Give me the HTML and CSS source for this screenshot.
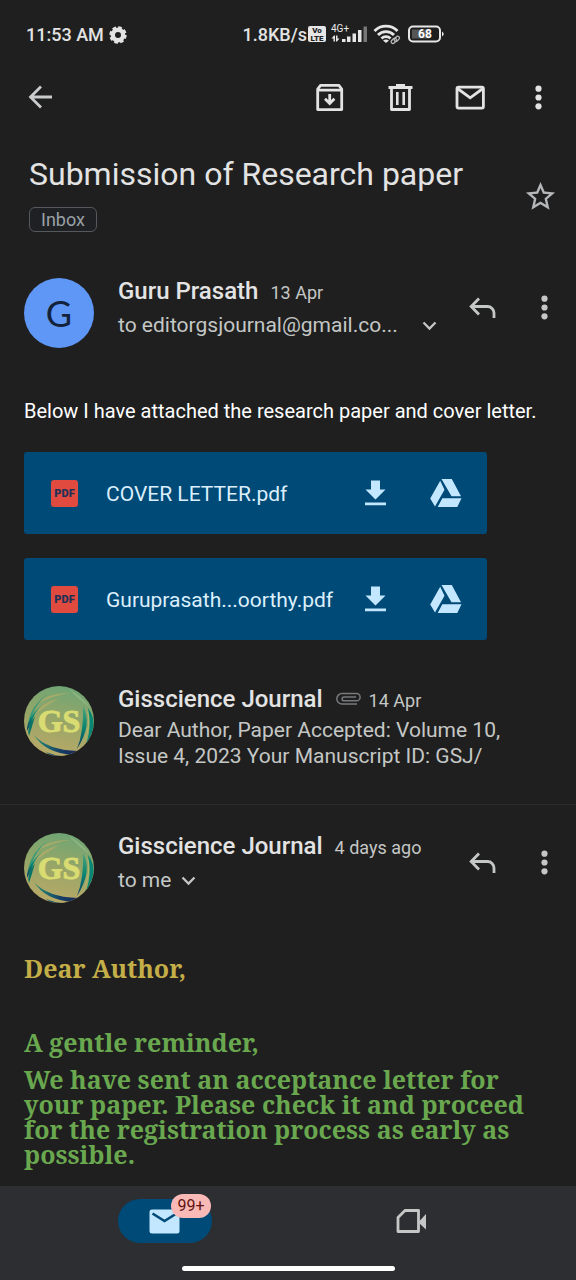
FILE: index.html
```html
<!DOCTYPE html>
<html lang="en">
<head>
<meta charset="utf-8">
<meta name="viewport" content="width=device-width, initial-scale=1">
<title>Submission of Research paper</title>
<link rel="stylesheet" href="styles.css">
</head>
<body>
<svg class="sprite" aria-hidden="true">
  <defs>
    <linearGradient id="disc" x1="0.6" y1="0" x2="0.4" y2="1">
      <stop offset="0" stop-color="#6fa574"/>
      <stop offset="0.5" stop-color="#98a667"/>
      <stop offset="1" stop-color="#bba968"/>
    </linearGradient>
    <linearGradient id="leaf" x1="0" y1="0" x2="0" y2="1">
      <stop offset="0" stop-color="#4fa57c"/>
      <stop offset="0.5" stop-color="#078571"/>
      <stop offset="1" stop-color="#123c63"/>
    </linearGradient>
    <linearGradient id="deep" x1="0" y1="0" x2="1" y2="0">
      <stop offset="0" stop-color="#27917a"/>
      <stop offset="0.6" stop-color="#153f66"/>
      <stop offset="1" stop-color="#1a2559"/>
    </linearGradient>
    <clipPath id="round"><circle cx="35" cy="35" r="35"/></clipPath>
  </defs>
  <symbol id="more" viewBox="0 0 35 35"><g fill="currentColor"><circle cx="17.5" cy="8.7" r="3.1"/><circle cx="17.5" cy="17.5" r="3.1"/><circle cx="17.5" cy="26.3" r="3.1"/></g></symbol>
  <symbol id="reply" viewBox="0 0 35 35"><path d="M14 8.5 6.200 16.5l7.8 8M6.500 16.5h16a6.5 6.5 0 0 1 6.5 6.5v5" fill="none" stroke="currentColor" stroke-width="2.8"/></symbol>
  <symbol id="down" viewBox="0 0 35 35"><path d="m11.5 14.5 6 6 6-6" fill="none" stroke="currentColor" stroke-width="2.3"/></symbol>
  <symbol id="download" viewBox="0 0 35 35"><path d="M12 4.500h9v9h5.500L16.500 23.500 6.500 13.500H12zM6 26.500h21v2.800H6z" fill="currentColor"/></symbol>
  <symbol id="drive" viewBox="0 0 35 35"><path d="M12.500 3h10.300L32 20.200h-9.500zM11.200 4.800 15.500 13.800 6 30.500 1.200 22.500zM13.300 22.300H32.500l-4.200 8.700H8.700z" fill="currentColor"/></symbol>
  <symbol id="logo" viewBox="0 0 70 70">
    <g clip-path="url(#round)">
      <rect width="70" height="70" fill="url(#disc)"/>
      <path d="M12 18Q26 6 46 7Q27 10 12 18zM8 30Q17 17 35 12Q20 21 8 30z" fill="#bcae69" opacity="0.65"/>
      <path d="M45 3Q57 10 67 22Q55 14 45 3z" fill="#8db582"/>
      <path d="M23 8Q7 20 4 36L8 30Q12 18 23 8z" fill="#399b76"/>
      <path d="M19 18Q2 32 3 45L8 35Q10 27 19 18z" fill="url(#leaf)"/>
      <path d="M11 30Q2 42 5 50Q8 41 11 30z" fill="#087467"/>
      <path d="M59 20Q69 38 53 63Q60 45 59 20z" fill="url(#leaf)"/>
      <path d="M64 22Q76 38 62 58Q68 41 64 22z" fill="#078773"/>
      <path d="M63 23Q69 38 59 58Q67 40 63 23z" fill="#b5ba6d"/>
      <path d="M10 49Q23 64 54 65L49 69Q21 67 10 49z" fill="url(#deep)"/>
      <path d="M11 55Q25 69 49 70H34Q21 67 11 55z" fill="#b6ad68"/>
      <path d="M15 61Q27 71 44 70H28z" fill="url(#deep)"/>
    </g>
  </symbol>
</svg>

<header>
  <div class="status">
    <div class="status-group">
      <span>11:53 AM</span>
      <svg class="gear" viewBox="0 0 18 18"><circle cx="9" cy="9" r="5.200" fill="none" stroke="currentColor" stroke-width="4.400"/><circle cx="9" cy="9" r="7.400" fill="none" stroke="currentColor" stroke-width="2.600" stroke-dasharray="3.600 2.210"/></svg>
    </div>
    <div class="status-group status-right">
      <span>1.8KB/s</span>
      <svg class="signals" viewBox="0 0 138 24">
        <rect x="1" y="3" width="18" height="16" rx="2" fill="#e6e6e6"/>
        <text class="volte" x="10" y="10" text-anchor="middle">Vo</text>
        <text class="volte" x="10" y="18" text-anchor="middle">LTE</text>
        <text class="network" x="24" y="9">4G+</text>
        <g fill="#e6e6e6">
          <path d="M24.500 15.500l2.500-3h1v6h-1.500v-3zM32.500 15.500l-2.500 3h-1v-6h1.500v3z"/>
          <rect x="35" y="16" width="3.500" height="3"/><rect x="40" y="13.500" width="3.500" height="5.500"/><rect x="45.500" y="10.500" width="3.500" height="8.500"/><rect x="51" y="7" width="3.500" height="12"/>
          <rect x="56.500" y="3.500" width="3.500" height="15.500" fill="#777"/>
        </g>
        <g fill="none" stroke="#e6e6e6" stroke-width="2.800"><path d="M67.500 8a16 16 0 0 1 23 0M71 12a11 11 0 0 1 16 0M74.500 15.500a6.500 6.500 0 0 1 9 0"/></g>
        <path d="M76 17.500q3-2 6 0l-3 2.500z" fill="#e6e6e6"/>
        <g fill="none" stroke="#bbb" stroke-width="1.300"><rect x="84" y="16" width="6" height="3.500" rx="1.700" transform="rotate(-45 87 18)"/><rect x="87" y="14" width="6" height="3.500" rx="1.700" transform="rotate(-45 90 16)"/></g>
        <rect x="102" y="3.500" width="31" height="15" rx="4" fill="none" stroke="#e6e6e6" stroke-width="2"/>
        <rect x="105" y="6.500" width="17" height="9" fill="#555"/>
        <path d="M135 8.500q3.500 2.500 0 5z" fill="#e6e6e6"/>
        <text class="battery" x="118" y="15" text-anchor="middle">68</text>
      </svg>
    </div>
  </div>
  <div class="toolbar">
    <button class="tool back" aria-label="Back"><svg class="icon" viewBox="0 0 35 35"><path d="M18 6.500 7.500 17 18 27.500M7.500 17H29" fill="none" stroke="currentColor" stroke-width="2.800"/></svg></button>
    <span class="spacer"></span>
    <button class="tool" aria-label="Archive"><svg class="icon" viewBox="0 0 35 35"><g fill="none" stroke="currentColor" stroke-width="2.800" stroke-linejoin="round"><path d="M4.700 9 7.500 5.400h18.400L28.700 9v20.600h-24zM4.700 10.200h24"/><path d="M16.700 14v9.500M12 18.700l4.700 4.700 4.700-4.700" stroke-linejoin="miter"/></g></svg></button>
    <button class="tool" aria-label="Delete"><svg class="icon" viewBox="0 0 35 35"><path d="M8.500 8v21.500h18V8" fill="none" stroke="currentColor" stroke-width="2.800" stroke-linejoin="round"/><path d="M5.500 6H13V4h9v2h7.500v3h-24zM13 12h2.600v13H13zM19.400 12H22v13h-2.600z" fill="currentColor"/></svg></button>
    <button class="tool" aria-label="Mark as unread"><svg class="icon" viewBox="0 0 35 35"><g fill="none" stroke="currentColor" stroke-width="2.800"><rect x="4" y="7.100" width="26.400" height="21" rx="1.500"/><path d="m4.500 8.500 12.700 9.300 12.700-9.300"/></g></svg></button>
    <button class="tool tool-last" aria-label="More options"><svg class="icon"><use href="#more"/></svg></button>
  </div>
</header>

<main>
  <div class="subject">
    <div>
      <h1>Submission of Research paper</h1>
      <span class="label">Inbox</span>
    </div>
    <button class="star" aria-label="Star"><svg class="icon" viewBox="0 0 24 24"><path d="M22 9.240l-7.190-.62L12 2 9.190 8.630 2 9.240l5.460 4.730L5.820 21 12 17.270 18.180 21l-1.630-7.030L22 9.240zM12 15.400l-3.760 2.270 1-4.280-3.320-2.880 4.380-.38L12 6.100l1.710 4.040 4.380.38-3.320 2.880 1 4.280L12 15.400z" fill="currentColor"/></svg></button>
  </div>

  <article class="message first">
    <div class="sender">
      <span class="avatar letter">G</span>
      <div class="who">
        <div class="line"><h2>Guru Prasath</h2><time>13 Apr</time></div>
        <button class="recipients"><span>to editorgsjournal@gmail.co...</span><svg class="icon"><use href="#down"/></svg></button>
      </div>
      <button class="action" aria-label="Reply"><svg class="icon"><use href="#reply"/></svg></button>
      <button class="action" aria-label="More"><svg class="icon"><use href="#more"/></svg></button>
    </div>
    <p class="body">Below I have attached the research paper and cover letter.</p>
    <ul class="files">
      <li class="file">
        <span class="pdf">PDF</span><span class="filename">COVER LETTER.pdf</span>
        <button class="file-button" aria-label="Download"><svg class="icon"><use href="#download"/></svg></button>
        <button class="file-button" aria-label="Save to Drive"><svg class="icon"><use href="#drive"/></svg></button>
      </li>
      <li class="file">
        <span class="pdf">PDF</span><span class="filename">Guruprasath...oorthy.pdf</span>
        <button class="file-button" aria-label="Download"><svg class="icon"><use href="#download"/></svg></button>
        <button class="file-button" aria-label="Save to Drive"><svg class="icon"><use href="#drive"/></svg></button>
      </li>
    </ul>
  </article>

  <article class="message collapsed">
    <div class="sender">
      <div class="avatar emblem"><svg aria-hidden="true"><use href="#logo"/></svg><span>GS</span></div>
      <div class="who">
        <div class="line"><h2>Gisscience Journal</h2>
          <svg class="clip" viewBox="0 0 26 14"><path d="M22 12H7a5.200 5.200 0 0 1 0-10.400h14.500a3.600 3.600 0 0 1 0 7.200H9a1.900 1.900 0 0 1 0-3.800h12" fill="none" stroke="currentColor" stroke-width="1.500"/></svg>
          <time>14 Apr</time></div>
        <p class="snippet">Dear Author, Paper Accepted: Volume 10, Issue 4, 2023 Your Manuscript ID: GSJ/</p>
      </div>
    </div>
  </article>

  <article class="message">
    <div class="sender">
      <div class="avatar emblem"><svg aria-hidden="true"><use href="#logo"/></svg><span>GS</span></div>
      <div class="who">
        <div class="line"><h2>Gisscience Journal</h2><time>4 days ago</time></div>
        <button class="recipients short"><span>to me</span><svg class="icon"><use href="#down"/></svg></button>
      </div>
      <button class="action" aria-label="Reply"><svg class="icon"><use href="#reply"/></svg></button>
      <button class="action" aria-label="More"><svg class="icon"><use href="#more"/></svg></button>
    </div>
    <div class="letter-body">
      <p class="greeting">Dear Author,</p>
      <p class="reminder">A gentle reminder,</p>
      <p>We have sent an acceptance letter for your paper. Please check it and proceed for the registration process as early as possible.</p>
    </div>
  </article>
</main>

<nav class="bottom">
  <div class="tabs">
    <a class="tab" href="#mail" aria-label="Mail">
      <span class="pill"><svg class="icon" viewBox="0 0 35 35"><rect x="2.500" y="5.500" width="30" height="24" rx="2.500" fill="#c2e7ff"/><path d="m5.500 9.500 12 7.500 12-7.500" fill="none" stroke="#004a77" stroke-width="2.600"/></svg><span class="badge">99+</span></span>
    </a>
    <a class="tab" href="#meet" aria-label="Meet"><svg class="icon" viewBox="0 0 35 35"><path d="M4 13.500 11 6.500h13.500v21H4z" fill="none" stroke="currentColor" stroke-width="2.800" stroke-linejoin="round"/><path d="m25.500 17 6.500-7v15.500l-6.500-6z" fill="currentColor"/></svg></a>
  </div>
  <div class="home"></div>
</nav>
</body>
</html>
```
FILE: styles.css
```css
* { box-sizing: border-box; margin: 0; padding: 0; }

body {
  display: flex;
  flex-direction: column;
  min-height: 100vh;
  background: #1f1f1f;
  color: #e3e3e3;
  font-family: Roboto, "Noto Sans", sans-serif;
}

button {
  border: 0;
  background: none;
  color: inherit;
  font: inherit;
  cursor: pointer;
}

.sprite { position: absolute; width: 0; height: 0; }
.icon { display: block; flex: none; width: 35px; height: 35px; }

.status {
  display: flex;
  justify-content: space-between;
  align-items: center;
  height: 69px;
  padding: 0 131px 0 26px;
  font-size: 18px;
  font-weight: 500;
}
.status-group { display: flex; align-items: center; gap: 5px; }
.status-right { gap: 0; }
.gear { width: 18px; height: 18px; }
.signals { width: 138px; height: 24px; }
.volte { font-size: 8px; font-weight: 900; fill: #1f1f1f; }
.network { font-size: 10px; font-weight: 400; fill: #e6e6e6; }
.battery { font-size: 12px; font-weight: 700; fill: #ffffff; }

.toolbar { display: flex; align-items: center; height: 56px; padding: 0 5px; }
.tool { display: grid; place-items: center; width: 70px; height: 55px; }
.tool-last { width: 66px; }
.back { color: #c9cbcc; }
.spacer { flex: 1; }

.subject {
  display: flex;
  justify-content: space-between;
  padding: 25px 18px 0 29px;
}
h1 { font-size: 32px; font-weight: 400; line-height: 48px; }
.label {
  display: inline-block;
  margin-top: 9px;
  padding: 0 11px;
  border: 1px solid #55585c;
  border-radius: 6px;
  background: #1e2024;
  color: #9aa0a6;
  font-size: 18px;
  line-height: 23px;
}
.star { align-self: center; margin-top: 10px; color: #b5b7b9; }

.message.first { padding-top: 46px; }
.sender { display: flex; align-items: flex-start; padding: 0 1px 0 24px; }
.avatar { flex: none; width: 70px; height: 70px; margin-right: 24px; }
.letter {
  display: grid;
  place-items: center;
  border-radius: 50%;
  background: #5e97f6;
  color: #14233c;
  font-family: Lato, sans-serif;
  font-size: 36px;
}
.emblem { display: grid; place-items: center; }
.emblem > * { grid-area: 1 / 1; }
.emblem svg { width: 70px; height: 70px; }
.emblem span {
  color: #d9dc72;
  font-family: "Liberation Serif", serif;
  font-size: 32px;
  font-weight: 700;
  line-height: 70px;
  -webkit-text-stroke: 1px #d9dc72;
}
.who { flex: 1; min-width: 0; }
.line { display: flex; align-items: baseline; gap: 8px; white-space: nowrap; }
h2 { margin-right: 4px; font-size: 24px; font-weight: 500; line-height: 26px; }
time { color: #c4c7c5; font-size: 18px; }
.clip { align-self: center; width: 26px; height: 14px; color: #77797b; }
.recipients {
  display: flex;
  align-items: center;
  gap: 14px;
  margin-top: 4px;
  color: #c4c7c5;
  font-size: 21px;
  line-height: 35px;
  white-space: nowrap;
}
.recipients.short { gap: 0; }
.action { display: grid; place-items: center; width: 62px; height: 58px; color: #c4c7c5; }

.body { padding: 50px 24px 0; color: #ffffff; font-size: 20px; line-height: 26px; }

.files {
  display: grid;
  gap: 24px;
  margin: 28px 89px 0 24px;
  list-style: none;
}
.file {
  display: flex;
  align-items: center;
  height: 82px;
  padding: 0 6px 0 27px;
  border-radius: 3px;
  background: #004a77;
  color: #c2e7ff;
}
.pdf {
  display: grid;
  place-items: center;
  width: 27px;
  height: 27px;
  margin-right: 28px;
  border-radius: 3px;
  background: #e04a3f;
  color: #1f3157;
  font-size: 11px;
  font-weight: 900;
}
.filename { flex: 1; padding-top: 2px; color: #dceffc; font-size: 21px; white-space: nowrap; }
.file-button { display: grid; place-items: center; width: 70px; height: 70px; }

.message.collapsed {
  margin-top: 46px;
  padding-bottom: 35px;
  border-bottom: 1px solid #2b2b2b;
}
.message.collapsed + .message { padding-top: 28px; }
.snippet { padding: 5px 60px 0 0; color: #c4c7c5; font-size: 21px; line-height: 26px; }

.letter-body {
  padding: 53px 24px 12px;
  color: #6aa84f;
  font-family: "Noto Serif", "Liberation Serif", serif;
  font-size: 25px;
  font-weight: 700;
  line-height: 25px;
}
.greeting { margin-bottom: 49px; color: #c4ae48; }
.reminder { margin-bottom: 12px; }

.bottom {
  position: sticky;
  bottom: 0;
  margin-top: auto;
  padding: 13px 41px 9px;
  background: #2d2e31;
}
.tabs { display: grid; grid-template-columns: 1fr 1fr; height: 44px; }
.tab { display: grid; place-items: center; color: #c4c7c5; text-decoration: none; }
.pill {
  position: relative;
  display: grid;
  place-items: center;
  width: 94px;
  height: 44px;
  border-radius: 22px;
  background: #004a77;
}
.badge {
  position: absolute;
  top: -5px;
  right: 1px;
  padding: 0 6px;
  border-radius: 12px;
  background: #f9b9b7;
  color: #601410;
  font-size: 16px;
  line-height: 24px;
}
.home {
  width: 213px;
  height: 5px;
  margin: 23px auto 0;
  border-radius: 3px;
  background: #ffffff;
}
```
